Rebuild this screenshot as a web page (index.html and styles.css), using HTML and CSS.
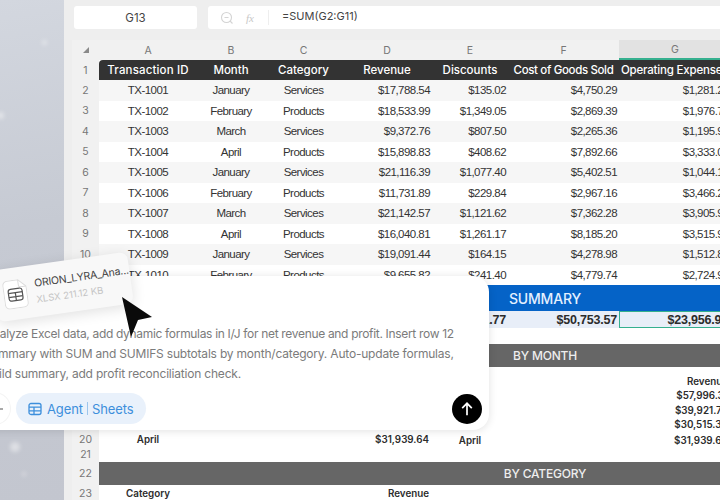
FILE: index.html
```html
<!DOCTYPE html>
<html lang="en">

<head>
    <meta charset="UTF-8">
    <title>Agent Sheets</title>
    <link rel="stylesheet" href="styles.css">
</head>

<body>
    <div class="backdrop">
        <i class="flake f1"></i>
        <i class="flake f2"></i>
        <i class="flake f3"></i>
        <i class="flake f4"></i>
    </div>

    <main class="app">
        <div class="formula-bar">
            <div class="name-box">G13</div>
            <div class="formula-box">
                <svg class="zoom-icon" viewBox="0 0 14 14" width="14" height="14">
                    <circle cx="6.5" cy="6.5" r="5" fill="none" stroke="#d4d4d4" stroke-width="1.1" />
                    <path d="M4.5 6.5h4M10 10l2.5 2.5" stroke="#d4d4d4" stroke-width="1.1" fill="none" />
                </svg>
                <span class="fx">fx</span>
                <span class="formula-sep"></span>
                <span class="formula">=SUM(G2:G11)</span>
            </div>
        </div>

        <div class="sheet">
            <div class="row letters">
                <span class="num corner"><i></i></span>
                <span>A</span><span>B</span><span>C</span><span>D</span><span>E</span><span>F</span>
                <span class="picked">G</span><span></span>
            </div>
            <div class="row head">
                <span class="num">1</span>
                <span class="first">Transaction ID</span><span>Month</span><span>Category</span><span>Revenue</span>
                <span>Discounts</span><span class="tight">Cost of Goods Sold</span><span class="tail">Operating Expenses</span><span></span>
            </div>
            <div class="row data even">
                <span class="num">2</span><span>TX-1001</span><span>January</span><span>Services</span>
                <span class="amt">$17,788.54</span><span class="amt">$135.02</span><span class="amt">$4,750.29</span><span class="amt">$1,281.27</span><span></span>
            </div>
            <div class="row data">
                <span class="num">3</span><span>TX-1002</span><span>February</span><span>Products</span>
                <span class="amt">$18,533.99</span><span class="amt">$1,349.05</span><span class="amt">$2,869.39</span><span class="amt">$1,976.73</span><span></span>
            </div>
            <div class="row data even">
                <span class="num">4</span><span>TX-1003</span><span>March</span><span>Services</span>
                <span class="amt">$9,372.76</span><span class="amt">$807.50</span><span class="amt">$2,265.36</span><span class="amt">$1,195.91</span><span></span>
            </div>
            <div class="row data">
                <span class="num">5</span><span>TX-1004</span><span>April</span><span>Products</span>
                <span class="amt">$15,898.83</span><span class="amt">$408.62</span><span class="amt">$7,892.66</span><span class="amt">$3,333.04</span><span></span>
            </div>
            <div class="row data even">
                <span class="num">6</span><span>TX-1005</span><span>January</span><span>Services</span>
                <span class="amt">$21,116.39</span><span class="amt">$1,077.40</span><span class="amt">$5,402.51</span><span class="amt">$1,044.18</span><span></span>
            </div>
            <div class="row data">
                <span class="num">7</span><span>TX-1006</span><span>February</span><span>Products</span>
                <span class="amt">$11,731.89</span><span class="amt">$229.84</span><span class="amt">$2,967.16</span><span class="amt">$3,466.25</span><span></span>
            </div>
            <div class="row data even">
                <span class="num">8</span><span>TX-1007</span><span>March</span><span>Services</span>
                <span class="amt">$21,142.57</span><span class="amt">$1,121.62</span><span class="amt">$7,362.28</span><span class="amt">$3,905.92</span><span></span>
            </div>
            <div class="row data">
                <span class="num">9</span><span>TX-1008</span><span>April</span><span>Products</span>
                <span class="amt">$16,040.81</span><span class="amt">$1,261.17</span><span class="amt">$8,185.20</span><span class="amt">$3,515.96</span><span></span>
            </div>
            <div class="row data even">
                <span class="num">10</span><span>TX-1009</span><span>January</span><span>Services</span>
                <span class="amt">$19,091.44</span><span class="amt">$164.15</span><span class="amt">$4,278.98</span><span class="amt">$1,512.83</span><span></span>
            </div>
            <div class="row data">
                <span class="num">11</span><span>TX-1010</span><span>February</span><span>Products</span>
                <span class="amt">$9,655.82</span><span class="amt">$241.40</span><span class="amt">$4,779.74</span><span class="amt">$2,724.90</span><span></span>
            </div>

            <div class="row band blue h-26">
                <span class="num">12</span><span class="wide">SUMMARY</span>
            </div>
            <div class="row totals h-17">
                <span class="num">13</span><span></span><span></span><span></span><span></span>
                <span class="amt">$4,391.77</span><span class="amt">$50,753.57</span><span class="amt selected">$23,956.90</span><span></span>
            </div>
            <div class="row h-16"><span class="num">14</span></div>
            <div class="row band h-23">
                <span class="num">15</span><span class="wide">BY MONTH</span>
            </div>
            <div class="row plain bottom h-21">
                <span class="num">16</span><span></span><span></span><span></span><span></span><span></span><span></span><span class="amt">Revenue</span><span></span>
            </div>
            <div class="row plain h-15">
                <span class="num">17</span><span></span><span></span><span></span><span></span><span></span><span></span><span class="amt">$57,996.31</span><span></span>
            </div>
            <div class="row plain h-14">
                <span class="num">18</span><span></span><span></span><span></span><span></span><span></span><span></span><span class="amt">$39,921.70</span><span></span>
            </div>
            <div class="row plain h-14">
                <span class="num">19</span><span></span><span></span><span></span><span></span><span></span><span></span><span class="amt">$30,515.34</span><span></span>
            </div>
            <div class="row plain h-14">
                <span class="num">20</span><span>April</span><span></span><span></span><span class="amt">$31,939.64</span><span class="low">April</span><span></span><span class="amt low">$31,939.64</span><span></span>
            </div>
            <div class="row h-15"><span class="num">21</span></div>
            <div class="row band h-23">
                <span class="num">22</span><span class="wide">BY CATEGORY</span>
            </div>
            <div class="row plain h-18">
                <span class="num">23</span><span>Category</span><span></span><span></span><span class="amt">Revenue</span>
            </div>
        </div>
    </main>

    <!-- prompt card over the sheet -->
    <section class="prompt-card">
        <p class="prompt">
            <span class="line-one">Analyze Excel data, add dynamic formulas in I/J for net revenue and profit. Insert row 12</span>
            <span>summary with SUM and SUMIFS subtotals by month/category. Auto-update formulas,</span>
            <span>build summary, add profit reconciliation check.</span>
        </p>
        <div class="prompt-tools">
            <span class="round-btn">
                <svg viewBox="0 0 10 10" width="10" height="10">
                    <path d="M0 5h10M5 0v10" stroke="#555" stroke-width="1.1" fill="none" />
                </svg>
            </span>
            <span class="agent-pill">
                <svg viewBox="0 0 14 14" width="14" height="14">
                    <rect x="1" y="1.5" width="12" height="11" rx="2" fill="none" stroke="#3d8fdc" stroke-width="1.3" />
                    <path d="M1 5.2h12M1 8.9h12M6 5.2v7.3" stroke="#3d8fdc" stroke-width="1.3" fill="none" />
                </svg>
                <span class="agent">Agent</span><i></i><span>Sheets</span>
            </span>
            <button class="send-btn" type="button">
                <svg viewBox="0 0 14 14" width="16" height="16">
                    <path d="M7 12.5V2M2.8 6.2 7 2l4.2 4.2" stroke="#fff" stroke-width="1.5" fill="none" />
                </svg>
            </button>
        </div>
    </section>

    <!-- dragged file -->
    <div class="file-chip">
        <svg class="file-icon" viewBox="0 0 24 29" width="24" height="29">
            <path d="M5 .5h11l7.500 7.500v16a4.500 4.500 0 0 1-4.500 4.500H5A4.500 4.500 0 0 1 .5 24V5A4.500 4.500 0 0 1 5 .5Z" fill="#fff" stroke="#dcdcdc" />
            <path d="M16 .5V6a2 2 0 0 0 2 2h5.500" fill="none" stroke="#dcdcdc" />
            <rect x="5" y="9" width="14" height="12" rx="2.500" fill="none" stroke="#555" stroke-width="1.200" />
            <path d="M5 13h14M5 17h14M12 13v8" fill="none" stroke="#555" stroke-width="1.200" />
        </svg>
        <span class="file-text">
            <b>ORION_LYRA_Ana...</b>
            <small>XLSX 211.12 KB</small>
        </span>
    </div>

    <svg class="pointer" viewBox="0 0 34 44" width="34" height="44">
        <path d="M1 1 31 21 17 24 10 41Z" fill="#0a0a0a" />
    </svg>
</body>

</html>
```
FILE: styles.css
```css
* {
    margin: 0;
    padding: 0;
    box-sizing: border-box;
}

body {
    position: relative;
    display: flex;
    width: 720px;
    height: 500px;
    overflow: hidden;
    background: #eeeeee;
    font-family: "Liberation Sans", Arial, sans-serif;
    color: #333;
}

/* Frosted desktop on the left */
.backdrop {
    position: relative;
    flex: 0 0 64px;
    background: linear-gradient(170deg, #d3d7df 0%, #c6cad3 45%, #c3c6cf 100%);
}

.flake {
    position: absolute;
    border-radius: 50%;
    background: rgba(255, 255, 255, 0.45);
    filter: blur(2px);
}

.f1 { left: 42px; top: 40px; width: 5px; height: 5px; }
.f2 { left: -3px; top: 112px; width: 7px; height: 7px; }
.f3 { left: 10px; top: 442px; width: 10px; height: 10px; }
.f4 { left: 22px; top: 472px; width: 4px; height: 4px; }

.app {
    flex: 1;
    min-width: 0;
    overflow: hidden;
}

/* Formula bar */
.formula-bar {
    display: flex;
    gap: 11px;
    height: 40px;
    padding: 6px 0 11px 10px;
}

.name-box {
    flex: 0 0 123px;
    display: flex;
    justify-content: center;
    align-items: center;
    border-radius: 3px;
    background: #fff;
    font-family: Inter, sans-serif;
    font-size: 11.500px;
    color: #444;
}

.formula-box {
    flex: 1;
    display: flex;
    align-items: center;
    padding-left: 12px;
    border-radius: 3px 0 0 3px;
    background: #fff;
    font-family: Inter, sans-serif;
    font-size: 11px;
    color: #444;
}

.fx {
    margin-left: 12px;
    font-family: "Liberation Serif", serif;
    font-style: italic;
    font-size: 11px;
    color: #c8c8c8;
}

.formula-sep {
    width: 1px;
    height: 15px;
    margin: 0 13px 0 14px;
    background: #eee;
}

.formula {
    padding-bottom: 3px;
}

/* Sheet */
.sheet {
    width: 919px;
    margin-left: 8px;
    background: #fff;
}

.row {
    display: grid;
    grid-template-columns: 27px 98px 68px 77px 90px 76px 111px 112px 260px;
    align-items: center;
    height: 20.5px;
    text-align: center;
    font-size: 11.500px;
    letter-spacing: -0.55px;
    white-space: nowrap;
}

.row > span {
    display: flex;
    justify-content: center;
    align-items: center;
    height: 100%;
    min-width: 0;
}

.row > .num {
    background: #f1f1f1;
    font-family: Inter, sans-serif;
    font-size: 10.500px;
    font-weight: 400;
    letter-spacing: 0;
    color: #777;
}

.row > .amt {
    justify-content: flex-end;
    padding-right: 2px;
}

.h-14 { height: 14.5px; }
.h-15 { height: 15px; }
.h-16 { height: 16px; }
.h-17 { height: 17px; }
.h-18 { height: 18px; }
.h-21 { height: 21px; }
.h-23 { height: 23px; }
.h-26 { height: 26px; }

.letters {
    height: 20px;
    background: #f1f1f1;
    font-family: Inter, sans-serif;
    font-size: 10.500px;
    letter-spacing: 0;
    color: #777;
}

.corner i {
    border-left: 6px solid transparent;
    border-bottom: 6px solid #8a8a8a;
}

.row > .picked {
    background: #e2e2e2;
    border-bottom: 2px solid #35b08f;
}

.head {
    height: 20px;
    font-family: Inter, sans-serif;
    font-size: 11.500px;
    font-weight: 500;
    letter-spacing: 0;
    color: #fff;
}

.head > span:not(.num) {
    background: #333;
}

.head > .first {
    border-radius: 4px 0 0 0;
    letter-spacing: 0.15px;
}

.head > .tight {
    letter-spacing: -0.35px;
}

.head > .tail {
    justify-content: flex-start;
    padding-left: 2px;
    letter-spacing: -0.2px;
}

.even > span:not(.num) {
    background: #f6f6f6;
}

/* Merged section bars */
.row > .wide {
    grid-column: 2 / 10;
    background: #666;
    color: #eee;
    font-family: Inter, sans-serif;
    font-size: 12px;
    font-weight: 500;
    letter-spacing: -0.2px;
}

.blue > .wide {
    background: #0563c7;
    font-size: 14px;
    color: #e4f0ff;
}

.totals {
    font-size: 12.500px;
    font-weight: 700;
    letter-spacing: -0.2px;
    color: #2c2c2c;
}

.totals > span:not(.num) {
    background: #e8eef8;
}

.row > .selected {
    border: 1px solid #35b08f;
}

.plain {
    font-family: Inter, sans-serif;
    font-size: 9.800px;
    font-weight: 600;
    letter-spacing: 0;
    color: #2c2c2c;
}

.plain > .amt {
    padding-right: 3px;
}

.bottom > .amt {
    align-items: flex-end;
    padding-bottom: 1px;
}

.row > .low {
    padding-top: 3px;
}

/* Prompt card */
.prompt-card {
    position: absolute;
    left: -40px;
    top: 276px;
    width: 529px;
    height: 154px;
    padding: 48px 7px 6px 25px;
    border-radius: 16px;
    background: #fff;
    box-shadow: 0 1px 8px rgba(0, 0, 0, 0.12);
}

.prompt {
    height: 69px;
    font-family: Inter, sans-serif;
    font-size: 12px;
    line-height: 20px;
    letter-spacing: -0.2px;
    color: #7b7b7b;
}

.prompt span {
    display: block;
    white-space: nowrap;
}

.prompt .line-one {
    letter-spacing: -0.32px;
}

.prompt-tools {
    display: flex;
    align-items: center;
    height: 31px;
}

.round-btn {
    display: flex;
    justify-content: center;
    align-items: center;
    width: 25px;
    height: 31px;
    margin-right: 6px;
    border-radius: 0 16px 16px 0;
    background: #fff;
    box-shadow: 0 0 0 1px #f4f4f4;
}

.agent-pill {
    display: flex;
    align-items: center;
    gap: 4px;
    height: 31px;
    padding: 0 12px;
    border-radius: 16px;
    background: #e9f1fb;
    font-family: Inter, sans-serif;
    font-size: 13px;
    letter-spacing: -0.1px;
    color: #3d8fdc;
}

.agent-pill svg {
    margin-right: 1px;
}

.agent-pill i {
    width: 1px;
    height: 13px;
    background: #9cc5ec;
}

.send-btn {
    display: flex;
    justify-content: center;
    align-items: center;
    width: 30px;
    height: 30px;
    margin-left: auto;
    border: none;
    border-radius: 50%;
    background: #000;
}

/* Dragged file chip, tilted */
.file-chip {
    position: absolute;
    left: -6px;
    top: 261px;
    display: flex;
    align-items: center;
    gap: 8px;
    width: 137px;
    height: 52px;
    padding-left: 9px;
    border-radius: 8px;
    background: #f8f8f8;
    box-shadow: 0 3px 14px rgba(0, 0, 0, 0.12);
    transform: rotate(-8deg);
}

.file-icon {
    flex: none;
}

.file-text {
    min-width: 0;
}

.file-text b {
    display: block;
    font-family: Inter, sans-serif;
    font-size: 10.500px;
    font-weight: 400;
    white-space: nowrap;
    letter-spacing: -0.2px;
    color: #444;
}

.file-text small {
    display: block;
    margin-top: 4px;
    font-family: Inter, sans-serif;
    font-size: 9.500px;
    white-space: nowrap;
    color: #c4c4c4;
}

.pointer {
    position: absolute;
    left: 121px;
    top: 296px;
}
```
